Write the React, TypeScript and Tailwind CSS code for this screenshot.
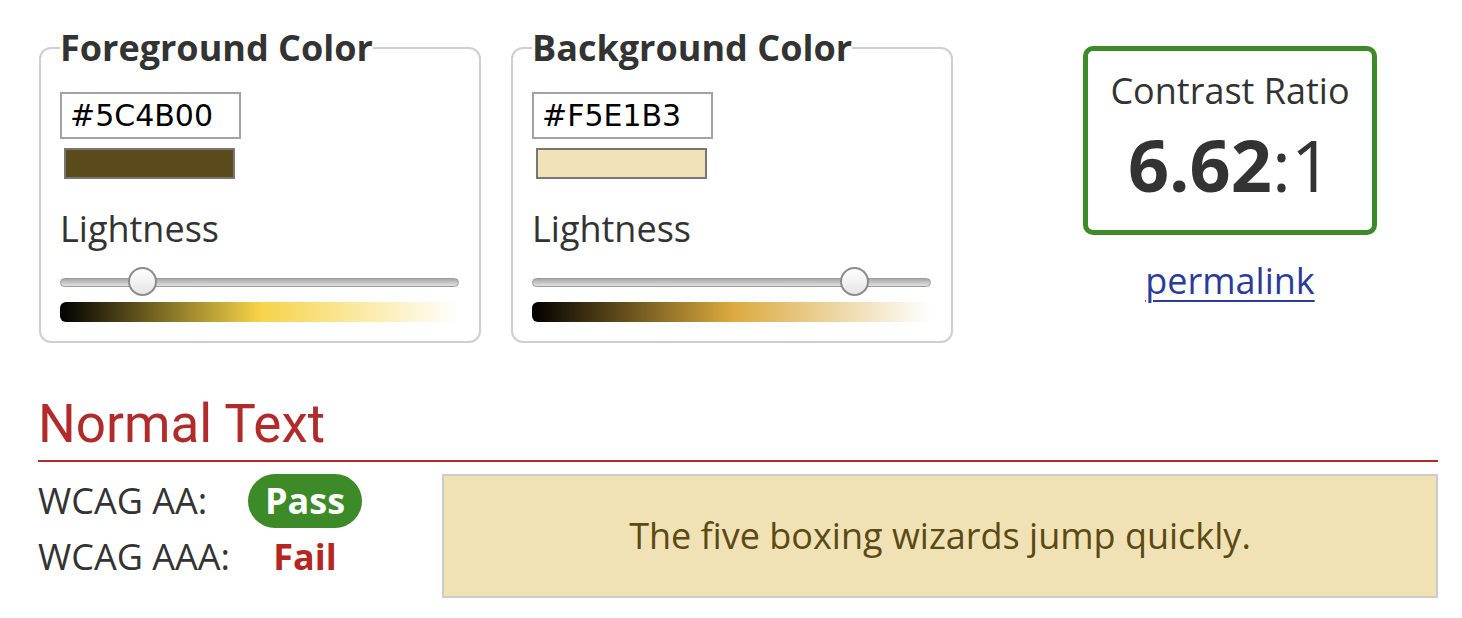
import React from "react";

const sans = { fontFamily: '"Open Sans", "Noto Sans", sans-serif' };

function Panel({
  title,
  hex,
  swatch,
  lightness,
  gradient,
}: {
  title: string;
  hex: string;
  swatch: string;
  lightness: number;
  gradient: string;
}) {
  const thumbLeft = lightness * (399 - 29);
  return (
    <fieldset className="w-[442px] shrink-0 rounded-[12px] border-2 border-[#cfcfcf] pl-[19px] pr-[20px] pt-[26px] pb-[19px]">
      <legend className="px-0 text-[36px] font-bold leading-[36px] text-[#333]">{title}</legend>
      <div className="flex h-[47px] w-[181px] items-center border-2 border-[#a3a3a3] bg-white pl-[8px]">
        <span
          className="text-[30px] leading-none text-black"
          style={{ fontFamily: '"DejaVu Sans", sans-serif' }}
        >
          {hex}
        </span>
      </div>
      <div className={`ml-[4px] mt-[9px] h-[31px] w-[171px] border-2 border-[#777] ${swatch}`} />
      <div className="mt-[25px] text-[36px] leading-[49px] text-[#333]">Lightness</div>
      <div className="relative mt-[25px] h-[9px] w-[399px] rounded-full border border-[#9a9a9a] bg-gradient-to-b from-[#a9a9a9] to-[#e2e2e2]">
        <div
          className="absolute top-[-12px] h-[29px] w-[29px] rounded-full border-2 border-[#8c8c8c] bg-gradient-to-b from-white to-[#e6e6e6]"
          style={{ left: thumbLeft }}
        />
      </div>
      <div className={`mt-[15px] h-[20px] w-[399px] rounded-l-md ${gradient}`} />
    </fieldset>
  );
}

export default function App() {
  return (
    <div className="h-[618px] w-[1462px] overflow-hidden bg-white pl-[38px] pr-[24px] pt-[30px]" style={sans}>
      <div className="flex items-start">
        <div className="ml-[1px] flex gap-[30px]">
          <Panel
            title="Foreground Color"
            hex="#5C4B00"
            swatch="bg-[#5b4a1a]"
            lightness={0.18}
            gradient="bg-[linear-gradient(to_right,#000000_0%,#f6d348_50%,#ffffff_100%)]"
          />
          <Panel
            title="Background Color"
            hex="#F5E1B3"
            swatch="bg-[#f1e2b7]"
            lightness={0.83}
            gradient="bg-[linear-gradient(to_right,#000000_0%,#dba93e_50%,#ffffff_100%)]"
          />
        </div>
        <div className="ml-[130px] mt-[16px] flex w-[294px] flex-col items-center">
          <div className="flex h-[189px] w-[294px] flex-col items-center rounded-[10px] border-[5px] border-[#3d8a29] pt-[15px] text-[#333]">
            <div className="text-[36px] leading-[49px]">Contrast Ratio</div>
            <div className="mt-[13px] text-[72px] leading-[72px]">
              <span className="font-bold">6.62</span>
              <span>:1</span>
            </div>
          </div>
          <a href="#" className="mt-[21px] text-[36px] leading-[49px] text-[#2b3b99] underline decoration-2 underline-offset-[6px]">
            permalink
          </a>
        </div>
      </div>

      <h2
        className="mt-[55px] border-b-2 border-[#b22b2b] pb-[9px] text-[53px] leading-[53px] text-[#b22b2b]"
        style={{ fontFamily: 'Roboto, "Open Sans", sans-serif' }}
      >
        Normal Text
      </h2>

      <div className="mt-[12px] flex items-start">
        <div className="flex flex-col gap-[2px]">
          <div className="flex h-[54px] items-center">
            <div className="w-[210px] text-[36px] text-[#333]">WCAG AA:</div>
            <div className="flex h-[54px] w-[114px] items-center justify-center rounded-full bg-[#3d8a29] text-[36px] font-bold text-white">
              Pass
            </div>
          </div>
          <div className="flex h-[54px] items-center">
            <div className="w-[210px] text-[36px] text-[#333]">WCAG AAA:</div>
            <div className="flex w-[114px] justify-center text-[36px] font-bold text-[#b5261e]">Fail</div>
          </div>
        </div>
        <div className="ml-[80px] flex h-[124px] flex-1 items-center justify-center border-2 border-[#cccccc] bg-[#f1e2b6] text-[36px] text-[#5b4a14]">
          The five boxing wizards jump quickly.
        </div>
      </div>
    </div>
  );
}
